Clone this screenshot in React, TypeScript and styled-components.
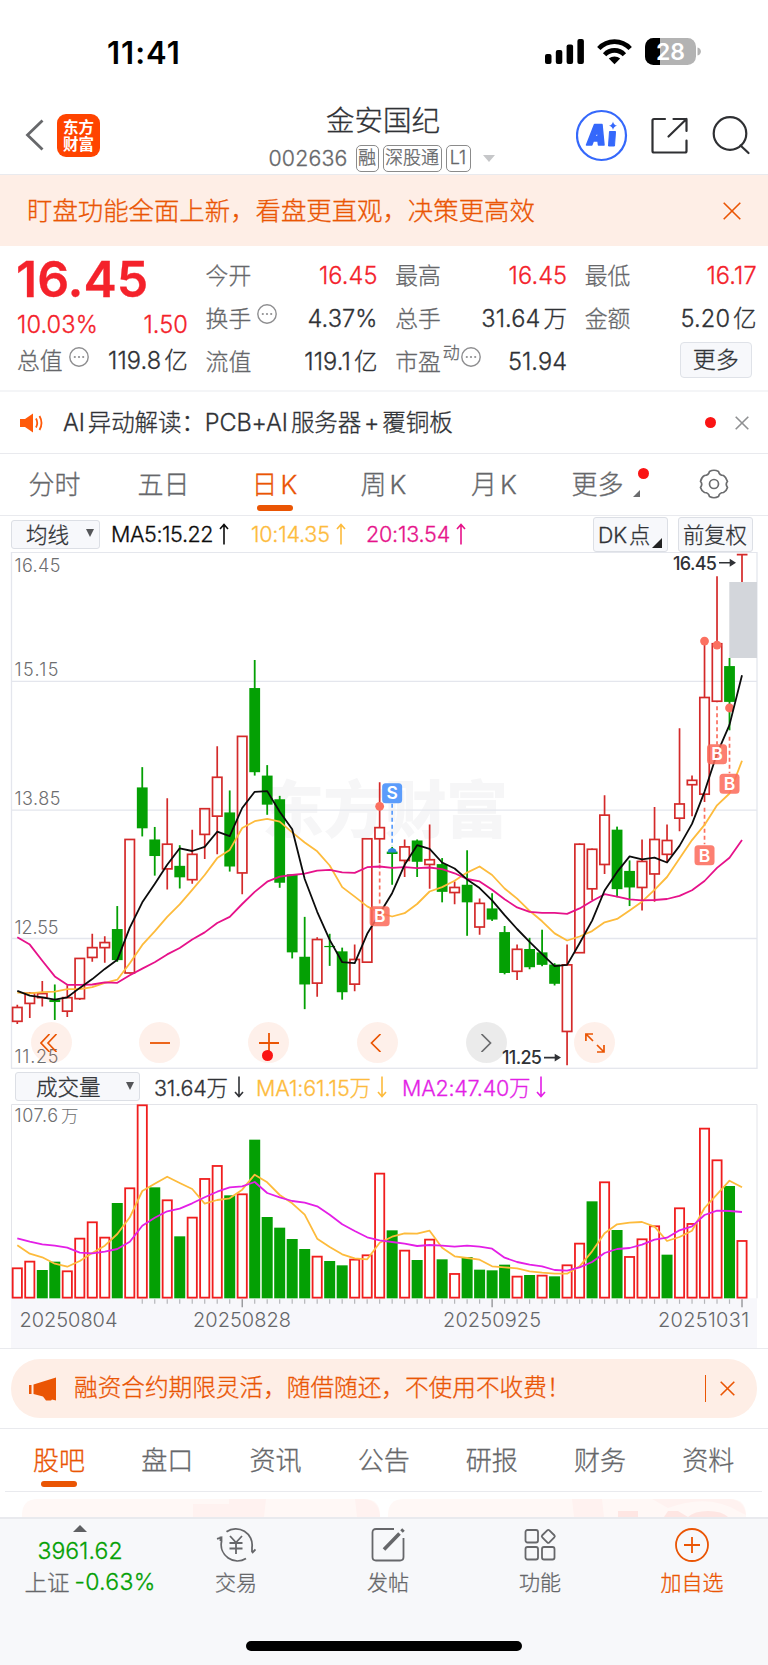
import React from "react";
import styled, { createGlobalStyle, css } from "styled-components";

const color = {
  orange: "#ea5504",
  red: "#f4222b",
  up: "#d42a2a",
  volUp: "#f01e1e",
  down: "#04a004",
  ink: "#303236",
  grey: "#66676a",
  line: "#e9eaee",
  ma5: "#0c0c0c",
  ma10: "#fdbb3c",
  ma20: "#e6128a",
  vma2: "#e31fe6",
};

const fonts = 'Inter, "Noto Sans CJK SC Light", "Noto Sans CJK SC DemiLight", "Noto Sans CJK SC", sans-serif';

const Global = createGlobalStyle`
  *, *::before, *::after { box-sizing: border-box; }
  body { margin: 0; background: #fff; }
`;

const Page = styled.div`
  width: 768px;
  height: 1665px;
  display: flex;
  flex-direction: column;
  overflow: hidden;
  background: #fff;
  color: ${color.ink};
  font-family: ${fonts};
  font-weight: 350;
  -webkit-text-stroke: 0.3px;
  white-space: nowrap;
`;

const Txt = styled.span<{ $size?: number; $c?: string; $ls?: number; $w?: number; $ml?: number; $mt?: number }>`
  font-size: ${(p) => p.$size ?? 23}px;
  line-height: 1.2;
  letter-spacing: ${(p) => p.$ls ?? 0}px;
  ${(p) => p.$c && css`color: ${p.$c};`}
  ${(p) => p.$w && css`font-weight: ${p.$w};`}
  ${(p) => p.$ml && css`margin-left: ${p.$ml}px;`}
  ${(p) => p.$mt && css`margin-top: ${p.$mt}px;`}
`;

/* ---------- status bar ---------- */

const StatusBar = styled.div`
  height: 96px;
  padding: 7px 67px 0 107px;
  display: flex;
  align-items: center;
  justify-content: space-between;
  color: #000;
  -webkit-text-stroke: 0;
`;

const StatusIcons = styled.div`
  display: flex;
  align-items: center;
  gap: 13px;
`;

/* ---------- header ---------- */

const Header = styled.header`
  height: 79px;
  border-bottom: 1px solid ${color.line};
  display: grid;
  grid-template-columns: 250px 1fr 250px;
`;

const HeaderLeft = styled.div`
  display: flex;
  align-items: center;
  padding-left: 25px;
  gap: 13px;
`;

const Logo = styled.div`
  width: 43px;
  height: 43px;
  border-radius: 9px;
  background: #ff4400;
  color: #fff;
  font-family: "Noto Sans CJK SC", sans-serif;
  font-size: 15.5px;
  font-weight: 700;
  line-height: 17px;
  display: flex;
  align-items: center;
  justify-content: center;
  text-align: center;
  white-space: normal;
  padding: 0 5px 1px;
  -webkit-text-stroke: 0;
`;

const HeaderTitle = styled.div`
  display: flex;
  flex-direction: column;
  align-items: center;
  padding: 8px 2px 0 0;
`;

const CodeRow = styled.div`
  display: flex;
  align-items: center;
  gap: 4px;
  height: 28px;
  margin-top: 6px;
  padding-right: 3px;
`;

const Code = styled.span`
  width: 83px;
  font-size: 21.3px;
  letter-spacing: 0.2px;
  color: ${color.grey};
`;

const Badge = styled.span<{ $w: number }>`
  width: ${(p) => p.$w}px;
  height: 27px;
  border: 1px solid #8b8b8b;
  border-radius: 5px;
  text-align: center;
  font-size: 18px;
  line-height: 24px;
  color: ${color.grey};
`;

const Caret = styled.i<{ $w: number; $h: number; $c: string; $ml?: number }>`
  width: 0;
  height: 0;
  margin-left: ${(p) => p.$ml ?? 0}px;
  border-left: ${(p) => p.$w / 2}px solid transparent;
  border-right: ${(p) => p.$w / 2}px solid transparent;
  border-top: ${(p) => p.$h}px solid ${(p) => p.$c};
`;

const HeaderRight = styled.div`
  display: flex;
  align-items: center;
  justify-content: flex-end;
  padding: 1px 17px 0 0;
`;

/* ---------- banner ---------- */

const Banner = styled.div`
  height: 71px;
  background: #feeee6;
  color: ${color.orange};
  display: flex;
  align-items: center;
  justify-content: space-between;
  padding: 1px 27px 0;
`;

/* ---------- quote ---------- */

const Quote = styled.section`
  height: 146px;
  border-bottom: 2px solid #f4f5f7;
  padding: 8px 11px 0 17px;
  display: grid;
  grid-template-columns: 171px 172px 172px 172px;
  column-gap: 17.6px;
`;

const QuoteCol = styled.div`
  display: flex;
  flex-direction: column;
`;

const QuoteRow = styled.div<{ $h?: number }>`
  height: ${(p) => p.$h ?? 43}px;
  display: flex;
  align-items: center;
  justify-content: space-between;
`;

const Price = styled.div`
  height: 50px;
  display: flex;
  align-items: center;
  font-size: 50px;
  font-weight: 600;
  letter-spacing: 0;
  margin-left: -1px;
  color: ${color.red};
`;

const Label = styled.span`
  display: flex;
  align-items: center;
  gap: 6px;
  margin-top: -3px;
  font-size: 22.8px;
  color: ${color.grey};
`;

const Value = styled.span<{ $red?: boolean }>`
  display: flex;
  align-items: baseline;
  gap: 3px;
  font-size: 23.6px;
  line-height: 28px;
  letter-spacing: 0.1px;
  ${(p) => p.$red && css`color: ${color.red};`}
`;

const Sup = styled.sup`
  font-size: 17px;
  line-height: 17px;
  align-self: flex-start;
  margin: 1px -5px 0 -4px;
`;

const MoreButton = styled.button`
  width: 72px;
  height: 36px;
  margin: 0 5px 3px auto;
  border: 1px solid #dfe2e8;
  border-radius: 4px;
  background: #f7f8fb;
  font: inherit;
  font-size: 23px;
  line-height: 32px;
  padding: 0;
  color: ${color.ink};
`;

/* ---------- AI insight row ---------- */

const Insight = styled.div`
  height: 62px;
  border-bottom: 1px solid ${color.line};
  padding: 0 19px 0 20px;
  display: flex;
  align-items: center;
`;

const InsightText = styled.div`
  margin: -3px 0 0 19px;
  display: flex;
  align-items: baseline;
  gap: 3px;
  font-size: 23.5px;
  letter-spacing: -0.1px;
`;

const InsightEnd = styled.div`
  margin-left: auto;
  display: flex;
  align-items: center;
  gap: 19px;
`;

const Dot = styled.i<{ $size: number }>`
  width: ${(p) => p.$size}px;
  height: ${(p) => p.$size}px;
  border-radius: 50%;
  background: #fa1414;
`;

/* ---------- period tabs ---------- */

const Periods = styled.nav`
  height: 62px;
  border-bottom: 1px solid ${color.line};
  display: grid;
  grid-template-columns: 109px 109px 113px 105px 116px 107px 109px;
`;

const Tab = styled.div<{ $active?: boolean; $pb?: number }>`
  position: relative;
  display: flex;
  align-items: center;
  justify-content: center;
  padding-bottom: ${(p) => p.$pb ?? 4}px;
  font-size: 26px;
  color: ${(p) => (p.$active ? color.orange : color.grey)};
  ${(p) =>
    p.$active &&
    css`
      &::after {
        content: "";
        position: absolute;
        left: calc(50% - 18px);
        bottom: 4px;
        width: 36px;
        height: 6px;
        border-radius: 3px;
        background: ${color.orange};
      }
    `}
`;

const Mixed = styled.span<{ $gap: number }>`
  display: flex;
  align-items: baseline;
  gap: ${(p) => p.$gap}px;
`;

const MoreDot = styled(Dot)`
  position: absolute;
  right: 10px;
  top: 14px;
`;

const Corner = styled.i<{ $size: number; $c: string }>`
  width: 0;
  height: 0;
  border-left: ${(p) => p.$size}px solid transparent;
  border-bottom: ${(p) => p.$size}px solid ${(p) => p.$c};
`;

const TabCorner = styled(Corner)`
  align-self: flex-end;
  margin: 0 0 14px 9px;
`;

/* ---------- indicator rows ---------- */

const Indicator = styled.div<{ $h: number; $pl: number }>`
  height: ${(p) => p.$h}px;
  padding: 0 15px 0 ${(p) => p.$pl}px;
  display: flex;
  align-items: center;
`;

const Select = styled.div<{ $w: number; $pl: number }>`
  width: ${(p) => p.$w}px;
  height: 29px;
  border: 1px solid #dcdfe5;
  border-radius: 3px;
  background: #f7f8fb;
  display: flex;
  align-items: center;
  justify-content: space-between;
  padding: 0 5px 2px ${(p) => p.$pl}px;
  font-size: 21.5px;
`;

const Values = styled.div<{ $ml: number }>`
  margin-left: ${(p) => p.$ml}px;
  display: flex;
  align-items: center;
`;

const ValueItem = styled.span<{ $c: string; $w: number; $ls: number }>`
  width: ${(p) => p.$w}px;
  display: flex;
  align-items: center;
  gap: 4px;
  color: ${(p) => p.$c};
  font-size: 21.5px;
  letter-spacing: ${(p) => p.$ls}px;
`;

const Tools = styled.div`
  margin-left: auto;
  display: flex;
  gap: 10px;
`;

const ToolButton = styled.div`
  position: relative;
  width: 75px;
  height: 35px;
  border: 1px solid #dcdfe5;
  border-radius: 3px;
  background: #f7f8fb;
  display: flex;
  align-items: center;
  padding: 0 0 1px 4px;
  font-size: 21.3px;
`;

const ToolCorner = styled(Corner)`
  position: absolute;
  right: 5px;
  bottom: 3px;
`;

/* ---------- chart ---------- */

const ChartWrap = styled.div`
  position: relative;
  height: 517px;
`;

const ChartControls = styled.div`
  position: absolute;
  left: 30.5px;
  top: 470px;
  display: flex;
  gap: 67.8px;
`;

const RoundButton = styled.div<{ $grey?: boolean; $shift?: number }>`
  position: relative;
  width: 41px;
  height: 41px;
  padding-right: ${(p) => p.$shift ?? 0}px;
  border-radius: 50%;
  background: ${(p) => (p.$grey ? "rgba(0,0,0,.08)" : "rgba(250,110,50,.1)")};
  display: flex;
  align-items: center;
  justify-content: center;
`;

const ControlDot = styled(Dot)`
  position: absolute;
  left: 13.5px;
  bottom: 2px;
`;

const Block = styled.svg`
  display: block;
  flex: none;
`;

/* ---------- promo ---------- */

const PromoWrap = styled.div`
  height: 81px;
  border-top: 1px solid ${color.line};
  border-bottom: 1px solid ${color.line};
  padding: 10px 11px 0;
`;

const Promo = styled.div`
  height: 59px;
  border-radius: 29px;
  background: #feeee6;
  color: ${color.orange};
  display: flex;
  align-items: center;
  padding: 0 22px 0 18px;
`;

const Divider = styled.i`
  width: 1.5px;
  height: 27px;
  background: ${color.orange};
  margin: 0 14px 0 auto;
`;

/* ---------- section tabs and cards ---------- */

const Sections = styled.nav`
  height: 63px;
  margin: 0 6px;
  border-bottom: 1px solid ${color.line};
  display: grid;
  grid-template-columns: repeat(7, 108.2px);
  margin-left: 5px;
`;

const Cards = styled.div`
  height: 25px;
  padding: 7px 22px 0;
  display: grid;
  grid-template-columns: 1fr 1fr;
  gap: 8px;
  overflow: hidden;
`;

/* ---------- bottom bar ---------- */

const BottomBar = styled.footer`
  flex: 1;
  border-top: 2px solid ${color.line};
  background: #f7f8fa;
  display: flex;
  flex-direction: column;
  align-items: center;
  justify-content: space-between;
  padding-bottom: 14px;
`;

const BottomItems = styled.div`
  width: 100%;
  display: grid;
  grid-template-columns: 160px repeat(4, 152px);
`;

const BottomItem = styled.div<{ $c?: string }>`
  display: flex;
  flex-direction: column;
  align-items: center;
  padding-top: 8px;
  gap: 5px;
  font-size: 21px;
  line-height: 30px;
  color: ${(p) => p.$c ?? color.grey};
`;

const IndexItem = styled.div`
  display: flex;
  flex-direction: column;
  align-items: center;
  padding-top: 6px;
  font-size: 23px;
  color: ${color.down};
`;

const IndexLine = styled.div`
  display: flex;
  gap: 5px;
  margin: 3px 0 0 20px;
  line-height: 30px;
`;

const HomeIndicator = styled.div`
  width: 276px;
  height: 10px;
  border-radius: 5px;
  background: #000;
`;

/* ---------- icons ---------- */

const Cross = ({ size, c, w = 1.6 }: { size: number; c: string; w?: number }) => (
  <Block width={size} height={size} viewBox={`0 0 ${size} ${size}`} stroke={c} strokeWidth={w}>
    <path d={`M.7 .7L${size - 0.7} ${size - 0.7}M${size - 0.7} .7L.7 ${size - 0.7}`} />
  </Block>
);

const InfoSvg = styled(Block)`
  margin-top: -6px;
`;

const Info = () => (
  <InfoSvg width="20" height="20" viewBox="0 0 20 20">
    <circle cx="10" cy="10" r="9.2" fill="none" stroke="#8e8e90" strokeWidth="1.4" />
    <g fill="#8e8e90">
      <circle cx="5.8" cy="10" r="1.1" />
      <circle cx="10" cy="10" r="1.1" />
      <circle cx="14.2" cy="10" r="1.1" />
    </g>
  </InfoSvg>
);

const Arrow = ({ up, c }: { up?: boolean; c: string }) => (
  <Block width="14" height="22" viewBox="0 0 14 22" fill="none" stroke={c} strokeWidth="1.6">
    <path d={up ? "M7 21.500V1.500M3 6L7 1.500L11 6" : "M7 .5V20.500M3 16L7 20.500L11 16"} />
  </Block>
);

/* ---------- chart data (heights sampled from the top of the pane) ---------- */

type Candle = [number, number, number, number, 0 | 1];

const candles: Candle[] = [
  [1375, 1383, 1424, 1432, 1], [1337, 1341, 1371, 1414, 1], [1305, 1342, 1354, 1380, 1], [1315, 1360, 1367, 1420, 0],
  [1317, 1354, 1394, 1411, 1], [1237, 1238, 1357, 1361, 1], [1165, 1206, 1235, 1248, 1], [1172, 1191, 1206, 1251, 1],
  [1083, 1151, 1243, 1248, 0], [885, 886, 1281, 1282, 1], [672, 732, 853, 877, 0], [849, 886, 935, 993, 0],
  [764, 900, 973, 1034, 1], [903, 964, 998, 1031, 0], [857, 930, 1005, 1017, 1], [794, 795, 871, 944, 1],
  [610, 702, 817, 930, 1], [741, 806, 966, 981, 0], [580, 581, 985, 1048, 1], [355, 438, 687, 697, 0],
  [666, 697, 783, 813, 0], [757, 767, 1014, 1029, 0], [989, 989, 1220, 1238, 0], [1115, 1233, 1315, 1388, 0],
  [1175, 1182, 1311, 1351, 1], [1165, 1201, 1204, 1260, 0], [1206, 1217, 1338, 1360, 0], [1197, 1241, 1314, 1335, 1],
  [883, 884, 1249, 1250, 1], [717, 851, 884, 956, 1], [908, 922, 929, 1020, 0], [886, 908, 948, 997, 1],
  [886, 889, 952, 997, 0], [842, 946, 960, 1032, 1], [941, 959, 1041, 1072, 0], [1010, 1028, 1043, 1078, 1],
  [918, 1020, 1072, 1171, 0], [1061, 1075, 1145, 1168, 1], [1045, 1090, 1123, 1127, 0], [1142, 1160, 1281, 1285, 0],
  [1197, 1211, 1276, 1302, 1], [1177, 1210, 1264, 1270, 0], [1153, 1220, 1257, 1261, 0], [1252, 1256, 1313, 1318, 0],
  [1197, 1257, 1454, 1554, 1], [898, 900, 1221, 1222, 1], [913, 915, 1032, 1065, 1], [755, 814, 960, 988, 1],
  [848, 857, 1033, 1057, 0], [948, 979, 1028, 1083, 0], [886, 951, 1028, 1096, 1], [790, 886, 988, 1070, 1],
  [842, 889, 930, 955, 1], [557, 781, 823, 862, 1], [697, 711, 724, 817, 1], [300, 466, 752, 775, 1],
  [107, 307, 477, 480, 1], [349, 373, 479, 563, 0],
];

const ma5 = [1334, 1348, 1353, 1360, 1353, 1325, 1299, 1269, 1242, 1147, 1072, 1018, 961, 912, 920, 908, 863, 876, 793, 745, 743, 804, 856, 1003, 1100, 1183, 1249, 1252, 1165, 1105, 1045, 961, 903, 914, 954, 972, 1004, 1030, 1066, 1110, 1151, 1189, 1225, 1261, 1257, 1193, 1126, 1037, 982, 936, 945, 940, 954, 905, 840, 745, 632, 547, 400];
const ma10 = [1339, 1341, 1338, 1336, 1329, 1329, 1323, 1310, 1301, 1252, 1198, 1158, 1115, 1078, 1035, 991, 941, 917, 852, 832, 825, 833, 865, 895, 921, 963, 1027, 1055, 1084, 1103, 1114, 1104, 1077, 1040, 1027, 1008, 984, 966, 991, 1031, 1061, 1097, 1128, 1164, 1185, 1173, 1157, 1131, 1121, 1096, 1070, 1035, 997, 942, 888, 843, 785, 750, 653];
const ma20 = [1175, 1197, 1245, 1291, 1316, 1316, 1315, 1309, 1310, 1288, 1268, 1249, 1226, 1207, 1182, 1161, 1133, 1115, 1077, 1041, 1011, 996, 991, 987, 978, 976, 983, 985, 968, 966, 970, 968, 971, 969, 974, 986, 1003, 1010, 1035, 1063, 1087, 1100, 1103, 1103, 1106, 1090, 1068, 1048, 1055, 1063, 1066, 1065, 1062, 1053, 1036, 1009, 970, 940, 888];

const volumes = [624, 604, 630, 605, 633, 535, 486, 532, 429, 384, 135, 382, 420, 529, 472, 356, 317, 406, 402, 239, 471, 503, 537, 567, 589, 603, 616, 598, 585, 340, 511, 571, 600, 538, 598, 641, 591, 629, 631, 614, 649, 645, 646, 649, 615, 550, 424, 366, 510, 590, 537, 498, 584, 444, 491, 205, 300, 378, 542];
const volumeDown = new Set([2, 3, 8, 11, 13, 17, 19, 20, 21, 22, 23, 25, 26, 30, 32, 34, 36, 37, 38, 39, 41, 43, 46, 48, 52, 57]);
const vma1 = [556, 581, 592, 611, 620, 603, 579, 557, 522, 472, 393, 371, 350, 369, 387, 431, 420, 415, 389, 344, 367, 405, 430, 464, 536, 561, 583, 595, 598, 548, 530, 520, 521, 512, 563, 589, 594, 599, 619, 622, 625, 634, 638, 641, 641, 619, 574, 520, 493, 488, 486, 500, 543, 531, 512, 444, 403, 362, 382];
const vma2 = [535, 545, 553, 557, 563, 578, 580, 575, 567, 545, 497, 473, 454, 446, 430, 412, 395, 382, 379, 366, 399, 412, 423, 428, 439, 464, 493, 513, 532, 541, 546, 551, 558, 555, 557, 560, 557, 560, 566, 593, 606, 614, 619, 630, 632, 622, 606, 579, 567, 564, 554, 539, 533, 511, 499, 465, 452, 453, 456];

const cx = (i: number) => 17.3 + i * 12.495;
const py = (v: number) => v * 0.338 - 12;
const vy = (v: number) => v / 3 - 44;
const path = (pts: number[], f: (v: number) => number) =>
  pts.map((v, i) => `${i ? "L" : "M"}${cx(i).toFixed(1)} ${f(v).toFixed(1)}`).join("");

const markers: { i: number; dot: number; from: number; to: number; tag: number; sell?: boolean }[] = [
  { i: 29, dot: 788, from: 960, to: 1078, tag: 1113 },
  { i: 30, dot: 920, from: 780, to: 905, tag: 749, sell: true },
  { i: 55, dot: 299, from: 792, to: 900, tag: 933 },
  { i: 56, dot: 311, from: 492, to: 605, tag: 634 },
  { i: 57, dot: 497, from: 582, to: 690, tag: 721 },
];

const gridLabels: [string, number][] = [["16.45", 13], ["15.15", 117], ["13.85", 246.5], ["12.55", 375.5], ["11.25", 504.5]];

function PriceChart() {
  return (
    <Block width="768" height="517" viewBox="0 0 768 517" fontFamily={fonts} fontWeight="350">
      <text x="262" y="281" fontFamily='"Noto Sans CJK SC", sans-serif' fontSize="62" fontWeight="900" fill="#f6f6f7" textLength="246">东方财富</text>
      <g stroke="#e4e6ed" strokeWidth="1.3" fill="none">
        <path d="M11.500 129.300H757M11.500 258.200H757M11.500 386.500H757" />
        <rect x="11.500" y=".3" width="745.500" height="516" />
      </g>
      <rect x="729.300" y="30" width="27.700" height="76" fill="#d3d6db" />
      {candles.map(([hi, top, bot, lo, up], i) => {
        const x = cx(i);
        const c = up ? color.up : color.down;
        return up ? (
          <g key={i} stroke={c} strokeWidth="1.7" fill="none">
            <path d={`M${x} ${py(hi)}V${py(top)}M${x} ${py(bot)}V${py(lo)}`} />
            <rect x={x - 4.7} y={py(top)} width="9.400" height={py(bot) - py(top)} />
          </g>
        ) : (
          <g key={i} fill={c}>
            <rect x={x - 0.9} y={py(hi)} width="1.800" height={py(lo) - py(hi)} />
            <rect x={x - 5.4} y={py(top)} width="10.800" height={Math.max(1.2, py(bot) - py(top))} />
          </g>
        );
      })}
      <path d="M736.800 2.700H747.500M742 2.700V30" stroke={color.up} strokeWidth="1.700" />
      {markers.map((m) => {
        const c = m.sell ? "#5b9cfb" : "#fb7060";
        return (
          <g key={m.i}>
            <path d={`M${cx(m.i)} ${py(m.from)}V${py(m.to)}`} stroke={c} strokeWidth="1.700" strokeDasharray="4 3" />
            {m.sell ? (
              <path d={`M${cx(m.i) - 4.5} ${py(m.dot) + 1.5}a4.500 4.500 0 0 1 9 0z`} fill="#2b86d8" />
            ) : (
              <circle cx={cx(m.i)} cy={py(m.dot)} r="4.400" fill={c} />
            )}
          </g>
        );
      })}
      <g fill="none" strokeWidth="1.800" strokeLinejoin="round">
        <path d={path(ma10, py)} stroke={color.ma10} />
        <path d={path(ma20, py)} stroke={color.ma20} />
        <path d={path(ma5, py)} stroke={color.ma5} />
      </g>
      {markers.map((m) => (
        <g key={m.i}>
          <rect x={cx(m.i) - 10} y={py(m.tag) - 10} width="20" height="20" rx="3.500" fill={m.sell ? "#5b9cfb" : "#fb6a5a"} opacity={m.sell ? 1 : 0.86} />
          <text x={cx(m.i)} y={py(m.tag) + 6.2} fontSize="17.500" fontWeight="600" fill="#fff" textAnchor="middle">
            {m.sell ? "S" : "B"}
          </text>
        </g>
      ))}
      <g fontSize="18" fill="#6d6e70">
        {gridLabels.map(([t, y]) => (
          <text key={t} x="14.500" y={y + 6.5} textLength={t === "16.45" || t === "13.85" ? 46 : 44}>{t}</text>
        ))}
      </g>
      <g fontSize="18" fontWeight="450" fill={color.ink}>
        <text x="673" y="17.500" textLength="44">16.45</text>
        <text x="502" y="512" textLength="40">11.25</text>
      </g>
      <g stroke={color.ink} strokeWidth="1.600" fill={color.ink}>
        <path d="M719 10.800H731M730.500 8.300L734.500 10.800L730.500 13.300z" />
        <path d="M544 505.600H556M555.500 503.100L559.500 505.600L555.500 508.100z" />
      </g>
    </Block>
  );
}

function VolumeChart() {
  const base = vy(715);
  return (
    <Block width="768" height="244" viewBox="0 0 768 244" fontFamily={fonts} fontWeight="350">
      <rect x="11" y={base} width="746" height={244 - base} fill="#f7f7fb" />
      <path d={`M11.500 ${base}V.5H757V${base}`} fill="none" stroke="#e3e4e9" />
      <text x="14.500" y="18" fontSize="18" fill="#6d6e70" textLength="43.500">107.6</text>
      <text x="61" y="18" fontSize="17.500" fill="#6d6e70">万</text>
      {volumes.map((v, i) => {
        const down = volumeDown.has(i);
        const x = cx(i);
        return down ? (
          <rect key={i} x={x - 5.5} y={vy(v)} width="11" height={base - vy(v)} fill={color.down} />
        ) : (
          <rect key={i} x={x - 4.6} y={vy(v) + 0.3} width="9.200" height={base - vy(v) - 1} fill="#fff" stroke={color.volUp} strokeWidth="1.800" />
        );
      })}
      {volumes.map((_, i) =>
        i < 10 ? null : (
          <path key={i} d={`M${cx(i)} ${base + 1}v${i % 20 === 18 ? 8 : 4.5}`} stroke={i % 20 === 18 ? "#85868a" : "#b5b6ba"} strokeWidth="1.200" />
        )
      )}
      <g fill="none" strokeWidth="1.800" strokeLinejoin="round">
        <path d={path(vma1, vy)} stroke={color.ma10} />
        <path d={path(vma2, vy)} stroke={color.vma2} />
      </g>
      <g fontSize="20" fill="#66676a">
        <text x="19.500" y="222.500" textLength="98">20250804</text>
        <text x="193" y="222.500" textLength="98">20250828</text>
        <text x="443" y="222.500" textLength="98">20250925</text>
        <text x="658" y="222.500" textLength="91">20251031</text>
      </g>
    </Block>
  );
}

const sections = ["股吧", "盘口", "资讯", "公告", "研报", "财务", "资料"];

export default function App() {
  return (
    <Page>
      <Global />
      <StatusBar>
        <Txt $size={31} $w={600} $ls={1} $mt={2}>11:41</Txt>
        <StatusIcons>
          <Block width="39" height="25" viewBox="0 0 39 25">
            <rect x="0" y="15" width="6.500" height="10" rx="2" />
            <rect x="10.800" y="11" width="6.500" height="14" rx="2" />
            <rect x="21.600" y="5.500" width="6.500" height="19.500" rx="2" />
            <rect x="32.400" y="0" width="6.500" height="25" rx="2" />
          </Block>
          <Block width="35" height="26" viewBox="0 0 35 26" fill="none" stroke="#000" strokeWidth="4.600">
            <path d="M1.800 9.500C10.500 .3 24.500 .3 33.200 9.500" />
            <path d="M7.600 15.700C13 9.900 22 9.900 27.400 15.700" />
            <path d="M17.500 25.300L11.800 19.600C15 16.800 20 16.800 23.200 19.600Z" fill="#000" stroke="none" />
          </Block>
          <Block width="56" height="27" viewBox="0 0 56 27">
            <defs>
              <clipPath id="batt"><rect width="51" height="27" rx="8.500" /></clipPath>
            </defs>
            <g clipPath="url(#batt)">
              <rect width="51" height="27" fill="#b3b3b3" />
              <rect width="15" height="27" fill="#000" />
            </g>
            <path d="M52.500 9.500c4.500 1 4.500 7 0 8z" fill="#b3b3b3" />
            <text x="25.500" y="21.800" fontFamily="Inter" fontSize="23" fontWeight="600" fill="#fff" textAnchor="middle">28</text>
          </Block>
        </StatusIcons>
      </StatusBar>

      <Header>
        <HeaderLeft>
          <Block width="19" height="32" viewBox="0 0 19 32" fill="none" stroke="#67686b" strokeWidth="2.800">
            <path d="M17.500 1.500L2.500 16L17.500 30.500" />
          </Block>
          <Logo>东方财富</Logo>
        </HeaderLeft>
        <HeaderTitle>
          <Txt $size={28.5}>金安国纪</Txt>
          <CodeRow>
            <Code>002636</Code>
            <Badge $w={23}>融</Badge>
            <Badge $w={59}>深股通</Badge>
            <Badge $w={25}>L1</Badge>
            <Caret $w={12} $h={7} $c="#c6c7c9" $ml={8} />
          </CodeRow>
        </HeaderTitle>
        <HeaderRight>
          <Block width="175" height="54" viewBox="0 0 175 54" fill="none">
            <circle cx="25.500" cy="26.500" r="24.500" stroke="#3568fb" strokeWidth="2.200" />
            <g fill="#3568fb">
              <path fillRule="evenodd" stroke="#3568fb" strokeWidth="1.500" strokeLinejoin="round" d="M10.500 36L18.500 15.500H26L28 36H22.500L22 32H17.300L15.800 36ZM19 27.700H22L21.700 22Z" />
              <path d="M33.500 22.500H39.500L38.500 37H32.500Z" stroke="#3568fb" strokeLinejoin="round" />
              <path d="M37 12.500Q37.500 16 41 16.800Q37.500 17.500 37 21Q36.500 17.500 33 16.800Q36.500 16 37 12.500Z" />
            </g>
            <g stroke="#2f3033" strokeWidth="2.200" strokeLinecap="round" strokeLinejoin="round">
              <path d="M89 10H78Q76.500 10 76.500 11.500V42Q76.500 43.500 78 43.500H109Q110.500 43.500 110.500 42V31.500" />
              <path d="M97.500 10H110.500V22M110.500 10L92.500 27.500" />
              <circle cx="154" cy="24.500" r="16.300" />
              <path d="M164.500 36.500L172.500 44" />
            </g>
          </Block>
        </HeaderRight>
      </Header>

      <Banner>
        <Txt $size={25.4}>盯盘功能全面上新，看盘更直观，决策更高效</Txt>
        <Cross size={18} c={color.orange} />
      </Banner>

      <Quote>
        <QuoteCol>
          <Price>16.45</Price>
          <QuoteRow $h={42}>
            <Value $red>10.03%</Value>
            <Value $red>1.50</Value>
          </QuoteRow>
          <QuoteRow $h={30}>
            <Label>总值<Info /></Label>
            <Value>119.8<span>亿</span></Value>
          </QuoteRow>
        </QuoteCol>
        <QuoteCol>
          <QuoteRow>
            <Label>今开</Label>
            <Value $red>16.45</Value>
          </QuoteRow>
          <QuoteRow>
            <Label>换手<Info /></Label>
            <Value>4.37%</Value>
          </QuoteRow>
          <QuoteRow>
            <Label>流值</Label>
            <Value>119.1<span>亿</span></Value>
          </QuoteRow>
        </QuoteCol>
        <QuoteCol>
          <QuoteRow>
            <Label>最高</Label>
            <Value $red>16.45</Value>
          </QuoteRow>
          <QuoteRow>
            <Label>总手</Label>
            <Value>31.64<span>万</span></Value>
          </QuoteRow>
          <QuoteRow>
            <Label>市盈<Sup>动</Sup><Info /></Label>
            <Value>51.94</Value>
          </QuoteRow>
        </QuoteCol>
        <QuoteCol>
          <QuoteRow>
            <Label>最低</Label>
            <Value $red>16.17</Value>
          </QuoteRow>
          <QuoteRow>
            <Label>金额</Label>
            <Value>5.20<span>亿</span></Value>
          </QuoteRow>
          <QuoteRow>
            <MoreButton>更多</MoreButton>
          </QuoteRow>
        </QuoteCol>
      </Quote>

      <Insight>
        <Block width="24" height="20" viewBox="0 0 24 20" fill="#ff5a0a">
          <path d="M0 6H5L13 .5V19.500L5 14H0Z" />
          <path d="M16 5.500Q18.500 10 16 14.500M19.500 3Q23.500 10 19.500 17" fill="none" stroke="#ff5a0a" strokeWidth="1.800" />
        </Block>
        <InsightText>
          <span>AI</span>
          <span>异动解读：PCB+AI</span>
          <span>服务器</span>
          <span>+</span>
          <span>覆铜板</span>
        </InsightText>
        <InsightEnd>
          <Dot $size={11} />
          <Cross size={14} c="#8f9092" />
        </InsightEnd>
      </Insight>

      <Periods>
        <Tab>分时</Tab>
        <Tab>五日</Tab>
        <Tab $active><Mixed $gap={3}><span>日</span><span>K</span></Mixed></Tab>
        <Tab><Mixed $gap={3}><span>周</span><span>K</span></Mixed></Tab>
        <Tab><Mixed $gap={3}><span>月</span><span>K</span></Mixed></Tab>
        <Tab>
          更多
          <TabCorner $size={7} $c="#6b6c6e" />
          <MoreDot $size={11} />
        </Tab>
        <Tab $pb={1}>
          <Block width="30" height="30" viewBox="0 0 30 30" fill="none" stroke="#6b6c6e" strokeWidth="1.700" strokeLinejoin="round">
            <path d="M10.500 2.500Q15 0 19.500 2.500Q20.500 6.500 24.500 6.500Q27 8 28.500 12.500Q26 15 28.500 18.500Q27.500 22 24.500 23.500Q20.500 23.500 19.500 27.500Q15 30 10.500 27.500Q9.500 23.500 5.500 23.500Q2.500 22 1.500 18.500Q4 15 1.500 12.500Q2.500 8 5.500 6.500Q9.500 6.500 10.500 2.500Z" />
            <circle cx="15" cy="15" r="4.500" />
          </Block>
        </Tab>
      </Periods>

      <Indicator $h={36} $pl={11}>
        <Select $w={89} $pl={14}>
          均线
          <Caret $w={9} $h={8} $c="#555659" />
        </Select>
        <Values $ml={11}>
          <ValueItem $c="#0c0c0c" $w={140} $ls={-0.4}>MA5:15.22<Arrow up c="#0c0c0c" /></ValueItem>
          <ValueItem $c={color.ma10} $w={115} $ls={-0.2}>10:14.35<Arrow up c={color.ma10} /></ValueItem>
          <ValueItem $c={color.ma20} $w={105} $ls={-0.2}>20:13.54<Arrow up c={color.ma20} /></ValueItem>
        </Values>
        <Tools>
          <ToolButton><Mixed $gap={2}><span>DK</span><span>点</span></Mixed><ToolCorner $size={10} $c="#222" /></ToolButton>
          <ToolButton>前复权</ToolButton>
        </Tools>
      </Indicator>

      <ChartWrap>
        <PriceChart />
        <ChartControls>
          <RoundButton $shift={4}>
            <Block width="18" height="18" viewBox="0 0 18 18" fill="none" stroke={color.orange} strokeWidth="1.700">
              <path d="M9.500 0L1 9L9.500 18M16.500 0L8 9L16.500 18" />
            </Block>
          </RoundButton>
          <RoundButton>
            <Block width="20" height="20" viewBox="0 0 20 20" stroke={color.orange} strokeWidth="1.800"><path d="M0 10H20" /></Block>
          </RoundButton>
          <RoundButton>
            <Block width="20" height="20" viewBox="0 0 20 20" stroke={color.orange} strokeWidth="1.800"><path d="M0 10H20M10 0V20" /></Block>
            <ControlDot $size={11} />
          </RoundButton>
          <RoundButton $shift={2}>
            <Block width="12" height="18" viewBox="0 0 12 18" fill="none" stroke={color.orange} strokeWidth="1.700"><path d="M10.500 0L1.500 9L10.500 18" /></Block>
          </RoundButton>
          <RoundButton $grey>
            <Block width="12" height="18" viewBox="0 0 12 18" fill="none" stroke="#6b6c6e" strokeWidth="1.700"><path d="M1.500 0L10.500 9L1.500 18" /></Block>
          </RoundButton>
          <RoundButton>
            <Block width="20" height="20" viewBox="0 0 20 20" fill="none" stroke={color.orange} strokeWidth="1.700">
              <path d="M.9 8V1H8M1 1L8 8M12 19H19V12M19 19L12 12" />
            </Block>
          </RoundButton>
        </ChartControls>
      </ChartWrap>

      <Indicator $h={35} $pl={15}>
        <Select $w={125} $pl={20}>
          成交量
          <Caret $w={9} $h={8} $c="#555659" />
        </Select>
        <Values $ml={14}>
          <ValueItem $c={color.ink} $w={102} $ls={-0.2}>31.64万<Arrow c={color.ink} /></ValueItem>
          <ValueItem $c={color.ma10} $w={146} $ls={-0.1}>MA1:61.15万<Arrow c={color.ma10} /></ValueItem>
          <ValueItem $c={color.vma2} $w={150} $ls={-0.2}>MA2:47.40万<Arrow c={color.vma2} /></ValueItem>
        </Values>
      </Indicator>
      <VolumeChart />

      <PromoWrap>
        <Promo>
          <Block width="28" height="24" viewBox="0 0 28 24" fill={color.orange}>
            <path d="M0 8H2.500V17H0ZM4.500 7.500L27 .5V23.500L23 22.500L22 23.500H17L14 19.500L4.500 17Z" />
          </Block>
          <Txt $size={23.65} $ml={17}>融资合约期限灵活，随借随还，不使用不收费！</Txt>
          <Divider />
          <Cross size={15} c={color.orange} />
        </Promo>
      </PromoWrap>

      <Sections>
        {sections.map((s, i) => (
          <Tab key={s} $active={i === 0} $pb={3}>{s}</Tab>
        ))}
      </Sections>

      <Cards>
        <Block width="358" height="18" viewBox="0 0 358 18">
          <path d="M0 18V16Q0 0 16 0H342Q358 0 358 16V18Z" fill="#fff8f6" />
          <path d="M171 5H207V0H244L242 18H171ZM333 0H342Q356 1 358 16V18H335Z" fill="#fff2f0" />
        </Block>
        <Block width="358" height="18" viewBox="0 0 358 18">
          <path d="M0 18V16Q0 0 16 0H342Q358 0 358 16V18Z" fill="#fff8f6" />
          <path d="M184 0H214L216 18H186ZM264 0H342Q356 1 358 16L350 12Q320 -6 280 9Z" fill="#fff2f0" />
          <path d="M230 12H250V18H230ZM276 18L280 12H290L300 18Q306 12 320 12Q334 12 340 18Z" fill="#fee6e3" />
        </Block>
      </Cards>

      <BottomBar>
        <BottomItems>
          <IndexItem>
            <Block width="14" height="7" viewBox="0 0 14 7" fill="#5f6063"><path d="M0 7L7 0L14 7Z" /></Block>
            <Txt $size={23} $ls={0.1} $mt={6}>3961.62</Txt>
            <IndexLine>
              <Txt $size={22.5} $c={color.grey}>上证</Txt>
              <Txt $size={23} $ls={0.3}>-0.63%</Txt>
            </IndexLine>
          </IndexItem>
          <BottomItem>
            <Block width="40" height="36" viewBox="0 0 40 36" fill="none" stroke={color.grey} strokeWidth="1.800">
              <path d="M10.500 4.800A16.300 16.300 0 0 1 36 20.500V25M1 11.800L5.500 10.500V14.500A16.300 16.300 0 0 0 30 31.500M4.500 9.500V14M36 26L39.500 22.500" />
              <path d="M14 9L20 15.500L26 9M20 15.500V27M13.500 16H26.500M13.500 21.500H26.500" />
            </Block>
            交易
          </BottomItem>
          <BottomItem>
            <Block width="36" height="36" viewBox="0 0 36 36" fill="none" stroke={color.grey} strokeWidth="1.800">
              <path d="M24 2H6Q2.500 2 2.500 5.500V30Q2.500 33.500 6 33.500H30Q33.500 33.500 33.500 30V11" />
              <path d="M14 22.500L29.500 6.500M31.500 4.500L33.500 2.500" strokeWidth="3.600" />
            </Block>
            发帖
          </BottomItem>
          <BottomItem>
            <Block width="36" height="36" viewBox="0 0 36 36" fill="none" stroke={color.grey} strokeWidth="1.800">
              <rect x="3.500" y="3" width="12.500" height="12.500" rx="2" />
              <rect x="3.500" y="20" width="12.500" height="12.500" rx="2" />
              <rect x="20" y="20" width="12.500" height="12.500" rx="2" />
              <rect x="21.300" y="4.300" width="10" height="10" rx="1.500" transform="rotate(45 26.300 9.300)" />
            </Block>
            功能
          </BottomItem>
          <BottomItem $c={color.orange}>
            <Block width="36" height="36" viewBox="0 0 36 36" fill="none" stroke={color.orange} strokeWidth="1.800">
              <circle cx="18" cy="18" r="16" />
              <path d="M10 18H26M18 10V26" />
            </Block>
            加自选
          </BottomItem>
        </BottomItems>
        <HomeIndicator />
      </BottomBar>
    </Page>
  );
}
